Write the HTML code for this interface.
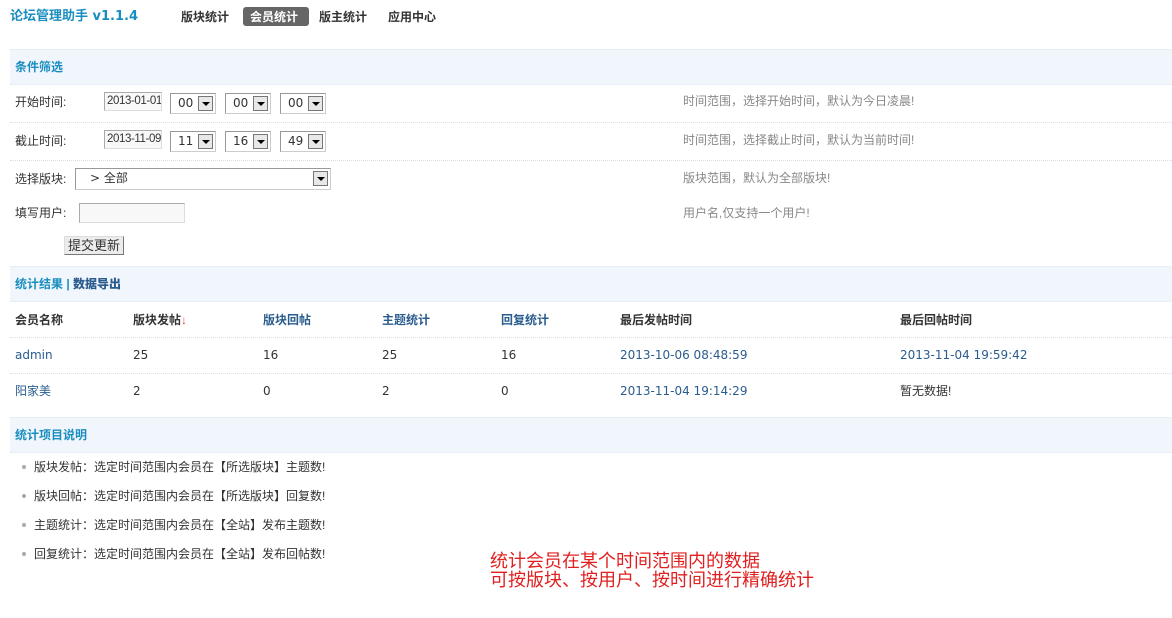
<!DOCTYPE html>
<html><head><meta charset="utf-8"><style>
*{margin:0;padding:0;box-sizing:border-box}
body{width:1172px;height:618px;background:#fff;position:relative;overflow:hidden;font-family:"Liberation Sans","Noto Sans CJK SC","WenQuanYi Zen Hei",sans-serif;font-size:12px;color:#333}
.a{position:absolute;white-space:nowrap;line-height:16px}
.v{font-family:"DejaVu Sans","Noto Sans CJK SC",sans-serif}
.band{position:absolute;left:10px;right:0;background:#f0f6fc;border-top:1px dotted #dde8f0;border-bottom:1px dotted #dde8f0}
.band span{position:absolute;left:5px;top:50%;margin-top:-8px;line-height:16px;font-weight:bold;color:#1a8dc0;font-size:12px}
.dot{position:absolute;left:10px;right:0;border-top:1px dotted #d5dde5}
.inp{position:absolute;border:1px solid #aaa;border-right-color:#ddd;border-bottom-color:#ddd;background:#f8f8f8;font-size:11.5px;line-height:17px;padding-left:2px;color:#333;white-space:nowrap;overflow:hidden;font-family:"Liberation Sans",sans-serif;letter-spacing:-0.4px}
.sel{position:absolute;border:1px solid #999;border-right-color:#ccc;border-bottom-color:#ccc;background:#fff;font-size:12px;line-height:19px;padding-left:7px;color:#333;font-family:"DejaVu Sans","Noto Sans CJK SC",sans-serif;white-space:nowrap}
.sel i{position:absolute;right:2px;top:2px;width:15px;height:15px;border:1px solid #777;background:#e8e8e8}
.sel i:after{content:"";position:absolute;left:3px;top:5px;border-left:4px solid transparent;border-right:4px solid transparent;border-top:4px solid #000}
.g{color:#888}
.b{color:#2a5c8e}
.h{font-weight:bold}
.li{position:absolute;left:34px;line-height:16px;white-space:nowrap}
.li:before{content:"";position:absolute;left:-12px;top:6px;width:4px;height:4px;border-radius:2px;background:#aaa}
</style></head><body>
<div class="a v" style="left:10px;top:8px;font-size:13px;font-weight:bold;color:#1a8dc0;line-height:18px">论坛管理助手 v1.1.4</div>
<div class="a h" style="left:181px;top:9px">版块统计</div>
<div class="a" style="left:243px;top:7px;width:66px;height:19px;background:#666;border-radius:3px"></div>
<div class="a h" style="left:250px;top:9px;color:#fff">会员统计</div>
<div class="a h" style="left:319px;top:9px">版主统计</div>
<div class="a h" style="left:388px;top:9px">应用中心</div>

<div class="band" style="top:49px;height:36px"><span>条件筛选</span></div>

<div class="a" style="left:15px;top:94px">开始时间:</div>
<div class="inp" style="left:104px;top:92px;width:58px;height:19px">2013-01-01</div>
<div class="sel" style="left:170px;top:93px;width:46px;height:21px">00<i></i></div>
<div class="sel" style="left:225px;top:93px;width:46px;height:21px">00<i></i></div>
<div class="sel" style="left:280px;top:93px;width:46px;height:21px">00<i></i></div>
<div class="a g" style="left:683px;top:93px">时间范围，选择开始时间，默认为今日凌晨!</div>
<div class="dot" style="top:122px"></div>

<div class="a" style="left:15px;top:133px">截止时间:</div>
<div class="inp" style="left:104px;top:130px;width:58px;height:19px">2013-11-09</div>
<div class="sel" style="left:170px;top:131px;width:46px;height:21px">11<i></i></div>
<div class="sel" style="left:225px;top:131px;width:46px;height:21px">16<i></i></div>
<div class="sel" style="left:280px;top:131px;width:46px;height:21px">49<i></i></div>
<div class="a g" style="left:683px;top:132px">时间范围，选择截止时间，默认为当前时间!</div>
<div class="dot" style="top:160px"></div>

<div class="a" style="left:15px;top:171px">选择版块:</div>
<div class="sel" style="left:75px;top:168px;width:256px;height:22px;padding-left:14px">&gt; 全部<i></i></div>
<div class="a g" style="left:683px;top:170px">版块范围，默认为全部版块!</div>

<div class="a" style="left:15px;top:205px">填写用户:</div>
<div class="inp" style="left:79px;top:203px;width:106px;height:20px"></div>
<div class="a g" style="left:683px;top:205px">用户名,仅支持一个用户!</div>

<div class="a" style="left:64px;top:236px;width:60px;height:19px;border:1px solid #777;border-top-color:#ddd;border-left-color:#ddd;background:#ececec;text-align:center;line-height:17px;font-size:13px">提交更新</div>

<div class="band" style="top:266px;height:36px"><span>统计结果 | <b style="color:#2a5c8e">数据导出</b></span></div>

<div class="a h" style="left:15px;top:312px">会员名称</div>
<div class="a h" style="left:133px;top:312px">版块发帖<span style="color:#e44;font-weight:normal">↓</span></div>
<div class="a h b" style="left:263px;top:312px">版块回帖</div>
<div class="a h b" style="left:382px;top:312px">主题统计</div>
<div class="a h b" style="left:501px;top:312px">回复统计</div>
<div class="a h" style="left:620px;top:312px">最后发帖时间</div>
<div class="a h" style="left:900px;top:312px">最后回帖时间</div>
<div class="dot" style="top:337px"></div>
<div class="a b v" style="left:15px;top:347px">admin</div>
<div class="a v" style="left:133px;top:347px">25</div>
<div class="a v" style="left:263px;top:347px">16</div>
<div class="a v" style="left:382px;top:347px">25</div>
<div class="a v" style="left:501px;top:347px">16</div>
<div class="a b v" style="left:620px;top:347px">2013-10-06 08:48:59</div>
<div class="a b v" style="left:900px;top:347px">2013-11-04 19:59:42</div>
<div class="dot" style="top:373px"></div>
<div class="a b" style="left:15px;top:383px">阳家美</div>
<div class="a v" style="left:133px;top:383px">2</div>
<div class="a v" style="left:263px;top:383px">0</div>
<div class="a v" style="left:382px;top:383px">2</div>
<div class="a v" style="left:501px;top:383px">0</div>
<div class="a b v" style="left:620px;top:383px">2013-11-04 19:14:29</div>
<div class="a" style="left:900px;top:383px">暂无数据!</div>

<div class="band" style="top:417px;height:36px"><span>统计项目说明</span></div>

<div class="li" style="top:459px">版块发帖：选定时间范围内会员在【所选版块】主题数!</div>
<div class="li" style="top:488px">版块回帖：选定时间范围内会员在【所选版块】回复数!</div>
<div class="li" style="top:517px">主题统计：选定时间范围内会员在【全站】发布主题数!</div>
<div class="li" style="top:546px">回复统计：选定时间范围内会员在【全站】发布回帖数!</div>

<div class="a" style="left:490px;top:552px;color:#e02020;font-size:18px;line-height:19px">统计会员在某个时间范围内的数据<br>可按版块、按用户、按时间进行精确统计</div>
</body></html>
